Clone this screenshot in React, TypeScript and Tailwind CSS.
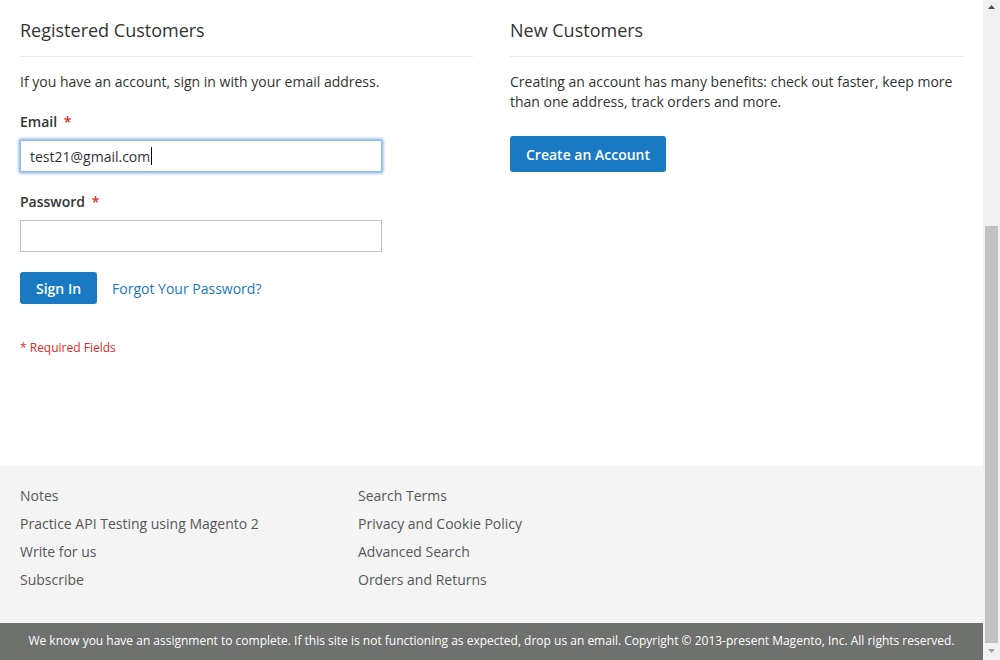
export default function App() {
  const leftLinks = ["Notes", "Practice API Testing using Magento 2", "Write for us", "Subscribe"];
  const rightLinks = ["Search Terms", "Privacy and Cookie Policy", "Advanced Search", "Orders and Returns"];

  return (
    <div
      className="flex h-[660px] w-[1000px] overflow-hidden bg-white text-[14px] text-[#333]"
      style={{ fontFamily: '"Open Sans", "Liberation Sans", sans-serif' }}
    >
      <div className="flex w-[983px] flex-col">
        {/* login columns */}
        <div className="flex h-[466px] gap-[37px] px-[20px]">
          <div className="w-[453px]">
            <div className="border-b border-[#e8e8e8] pt-[19px] pb-[15px] text-[18px] font-normal leading-[22px]">
              Registered Customers
            </div>
            <p className="mt-[15px] leading-[20px]">If you have an account, sign in with your email address.</p>

            <div className="mt-[20px] font-semibold leading-[20px]">
              Email <span className="ml-[3px] text-[#e02b27]">*</span>
            </div>
            <div className="mt-[8px] flex h-[32px] w-[362px] items-center border border-[#8fbde3] px-[9px] shadow-[0_0_3px_1px_#68a8e0]">
              <span>test21@gmail.com</span>
              <span className="ml-px h-[18px] w-px bg-black" />
            </div>

            <div className="mt-[20px] font-semibold leading-[20px]">
              Password <span className="ml-[3px] text-[#e02b27]">*</span>
            </div>
            <div className="mt-[8px] h-[32px] w-[362px] border border-[#c2c2c2]" />

            <div className="mt-[20px] flex items-center gap-[15px]">
              <button className="h-[32px] rounded-[3px] bg-[#1979c3] px-[16px] font-semibold text-white">Sign In</button>
              <a className="text-[#1979c3]">Forgot Your Password?</a>
            </div>

            <div className="mt-[36px] text-[12px] leading-[16px] text-[#e02b27]">* Required Fields</div>
          </div>

          <div className="w-[453px]">
            <div className="border-b border-[#e8e8e8] pt-[19px] pb-[15px] text-[18px] font-normal leading-[22px]">
              New Customers
            </div>
            <p className="mt-[15px] leading-[20px]">
              Creating an account has many benefits: check out faster, keep more than one address, track orders and more.
            </p>
            <button className="mt-[24px] h-[36px] rounded-[3px] bg-[#1979c3] px-[16px] font-semibold text-white">
              Create an Account
            </button>
          </div>
        </div>

        {/* footer */}
        <div className="flex h-[157px] bg-[#f4f4f4] px-[20px] pt-[20px] text-[#575757]">
          <ul className="flex w-[338px] flex-col gap-[8px] leading-[20px]">
            {leftLinks.map((l) => (
              <li key={l}>{l}</li>
            ))}
          </ul>
          <ul className="flex flex-col gap-[8px] leading-[20px]">
            {rightLinks.map((l) => (
              <li key={l}>{l}</li>
            ))}
          </ul>
        </div>
        <div className="flex flex-1 items-start justify-center bg-[#6e716e] pt-[9px] text-[12px] leading-[18px] text-white">
          We know you have an assignment to complete. If this site is not functioning as expected, drop us an email. Copyright © 2013-present Magento, Inc. All rights reserved.
        </div>
      </div>

      {/* window scrollbar */}
      <div className="relative w-[17px] bg-[#f1f1f1]">
        <svg className="absolute left-[5px] top-[5px]" width="7" height="4" viewBox="0 0 7 4">
          <path d="M3.5 0L7 4H0z" fill="#505050" />
        </svg>
        <div className="absolute left-[2px] top-[226px] h-[417px] w-[13px] bg-[#c1c1c1]" />
        <svg className="absolute left-[5px] top-[649px]" width="7" height="4" viewBox="0 0 7 4">
          <path d="M0 0H7L3.5 4z" fill="#a3a3a3" />
        </svg>
      </div>
    </div>
  );
}
